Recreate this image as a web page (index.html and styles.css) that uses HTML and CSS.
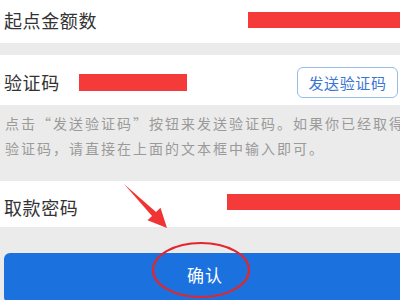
FILE: index.html
```html
<!DOCTYPE html>
<html lang="zh-CN">
<head>
	<meta charset="UTF-8">
	<title>取款</title>
	<link rel="stylesheet" href="styles.css">
</head>
<body>
	<section class="form">
		<div class="row row-amount">
			<span class="label">起点金额数</span>
			<span class="mask mask-amount"></span>
		</div>
		<div class="row row-code">
			<span class="label">验证码</span>
			<span class="mask mask-code"></span>
			<button class="send">发送验证码</button>
		</div>
		<p class="hint">点击“发送验证码”按钮来发送验证码。如果你已经取得验证码，请直接在上面的文本框中输入即可。</p>
		<div class="row row-pwd">
			<span class="label">取款密码</span>
			<span class="mask mask-pwd"></span>
		</div>
		<div class="submit">
			<button class="ok">确认</button>
		</div>
	</section>
	<svg class="mark" width="400" height="300" viewBox="0 0 400 300">
		<polygon points="124,184 156,212 160.5,207.7 167,228 147.5,220.3 152,216" fill="#f23333"/>
		<ellipse cx="201" cy="270" rx="48" ry="27" fill="none" stroke="#e3262b" stroke-width="2.2"/>
	</svg>
</body>
</html>
```

FILE: styles.css
```css
body, section, div, p, button {
	margin: 0;
	padding: 0;
}

body {
	background-color: #ebebeb;
	font-family: "Noto Sans CJK SC", sans-serif;
	width: 400px;
	height: 300px;
	overflow: hidden;
	position: relative;
}

.row {
	display: flex;
	align-items: center;
	background-color: #fff;
	padding-left: 4px;
}

.label {
	font-size: 18px;
	letter-spacing: 0.6px;
	color: #333;
	line-height: 24px;
}

.mask {
	display: block;
	background-color: #f53a3a;
}

.row-amount {
	height: 43px;
	padding-bottom: 4px;
	box-sizing: border-box;
	margin-bottom: 12px;
}

.mask-amount {
	width: 152px;
	height: 16px;
	margin-left: auto;
	margin-top: 1px;
}

.row-code {
	height: 50px;
	padding-top: 4px;
	box-sizing: border-box;
}

.mask-code {
	width: 108px;
	height: 17px;
	margin-left: 19px;
}

.send {
	margin-left: auto;
	margin-right: 2px;
	width: 101px;
	height: 31px;
	border: 1.5px solid #97bbea;
	border-radius: 6px;
	background-color: #fff;
	color: #3a77d4;
	font-family: inherit;
	font-size: 15px;
	letter-spacing: 0.6px;
}

.hint {
	height: 76px;
	box-sizing: border-box;
	padding: 6px 0 0 5px;
	font-size: 14px;
	letter-spacing: 2px;
	line-height: 24.5px;
	color: #9a9a9a;
	white-space: normal;
	width: 420px;
}

.row-pwd {
	height: 46px;
	padding-top: 6px;
	box-sizing: border-box;
}

.mask-pwd {
	width: 173px;
	height: 16px;
	margin-left: auto;
	margin-top: -10px;
}

.submit {
	padding: 26px 0 0 4px;
}

.ok {
	display: block;
	width: 402px;
	height: 50px;
	border: none;
	border-radius: 6px;
	background-color: #1b72df;
	color: #fff;
	font-family: inherit;
	font-size: 17px;
	letter-spacing: 1px;
	padding-bottom: 8px;
}

.mark {
	position: absolute;
	left: 0;
	top: 0;
}
```
